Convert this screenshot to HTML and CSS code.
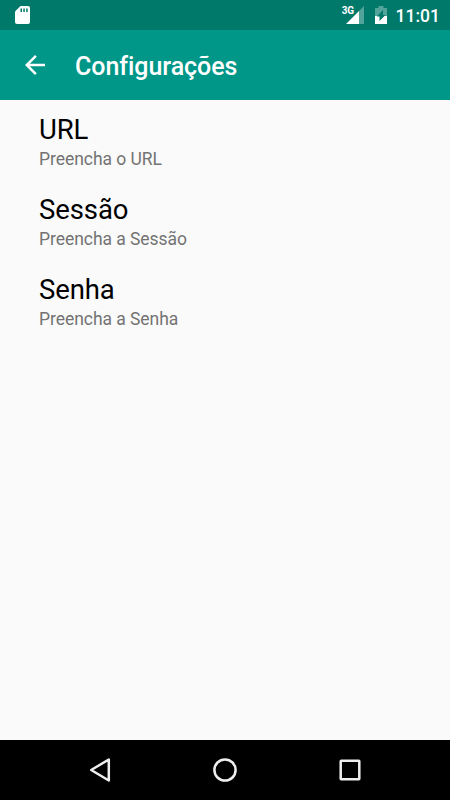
FILE: index.html
```html
<!DOCTYPE html>
<html lang="pt-BR">
<head>
<meta charset="utf-8">
<title>Configurações</title>
<link rel="stylesheet" href="styles.css">
</head>
<body>
<div class="status-bar">
  <svg class="sd-card" width="15" height="18" viewBox="0 0 15 18"><path fill="#fff" d="M5.500 0H13q2 0 2 2V16q0 2-2 2H2q-2 0-2-2V5.500z"/><path fill="#00796b" d="M5.500 2.500h1.500v3.500H5.500zM8.300 2.500h1.500v3.500H8.300zM11.200 2.500h1.500v3.500h-1.500z"/></svg>
  <span class="network">3G</span>
  <svg class="signal" width="18" height="18" viewBox="0 0 18 18"><path fill="#fff" fill-opacity=".32" d="M18 0v18h-5V5z"/><path fill="#fff" d="M13 5V18H0z"/></svg>
  <svg class="battery" width="12" height="18" viewBox="0 0 12 18"><path fill="#fff" fill-opacity=".32" d="M3.500 0h5v2H12v8H0V2h3.500z"/><path fill="#fff" d="M0 10h12v8H0z"/><path fill="#00796b" d="M8 4v5h2.500L4.500 15v-4.500H1.800z"/></svg>
  <span class="clock">11:01</span>
</div>
<header class="app-bar">
  <svg class="back" width="20" height="20" viewBox="0 0 20 20"><path fill="#fff" d="M20 8.750H4.800l7-7L10 0 0 10l10 10 1.760-1.760L4.800 11.250H20z"/></svg>
  <h1 class="title">Configurações</h1>
</header>
<main class="settings">
  <div class="item"><div class="name">URL</div><div class="hint">Preencha o URL</div></div>
  <div class="item"><div class="name">Sessão</div><div class="hint">Preencha a Sessão</div></div>
  <div class="item"><div class="name">Senha</div><div class="hint">Preencha a Senha</div></div>
</main>
<nav class="nav-bar">
  <svg width="26" height="26" viewBox="0 0 26 26"><path d="M21.800 2.500v21L4.200 13z"/></svg>
  <svg width="26" height="26" viewBox="0 0 26 26"><circle cx="13" cy="13" r="10.600"/></svg>
  <svg width="26" height="26" viewBox="0 0 26 26"><rect x="3.700" y="3.700" width="18.600" height="18.600" rx=".5"/></svg>
</nav>
</body>
</html>
```
FILE: styles.css
```css
* { box-sizing: border-box; }
body {
  margin: 0;
  height: 800px;
  display: flex;
  flex-direction: column;
  background: #fafafa;
  font-family: Roboto, sans-serif;
  overflow: hidden;
}
.status-bar {
  height: 30px;
  flex: none;
  display: flex;
  align-items: flex-start;
  padding: 6px 10px 0 15px;
  background: #00796b;
  color: #fff;
}
.network {
  margin-left: auto;
  margin-right: -8px;
  font-size: 10px;
  line-height: 10px;
  letter-spacing: -0.4px;
  font-weight: 700;
}
.battery { margin-left: 11px; }
.clock {
  margin-left: 9px;
  font-size: 17.5px;
  line-height: 20px;
  font-weight: 500;
}
.app-bar {
  height: 70px;
  flex: none;
  display: flex;
  align-items: center;
  padding-left: 25px;
  background: #009688;
  color: #fff;
}
.title {
  margin: 4px 0 0 30px;
  font-size: 25px;
  line-height: 30px;
  letter-spacing: -0.05px;
  font-weight: 500;
}
.settings {
  flex: 1;
  padding: 12px 0 0 39px;
}
.item { height: 80px; }
.name {
  font-size: 27.5px;
  line-height: 35px;
  letter-spacing: -0.1px;
  color: #000;
}
.hint {
  font-size: 17.5px;
  line-height: 24px;
  letter-spacing: -0.05px;
  color: #737373;
}
.nav-bar {
  height: 60px;
  flex: none;
  display: flex;
  align-items: center;
  justify-content: center;
  gap: 99px;
  background: #000;
}
.nav-bar svg {
  fill: none;
  stroke: #eee;
  stroke-width: 2.5;
  stroke-linejoin: round;
}
```
